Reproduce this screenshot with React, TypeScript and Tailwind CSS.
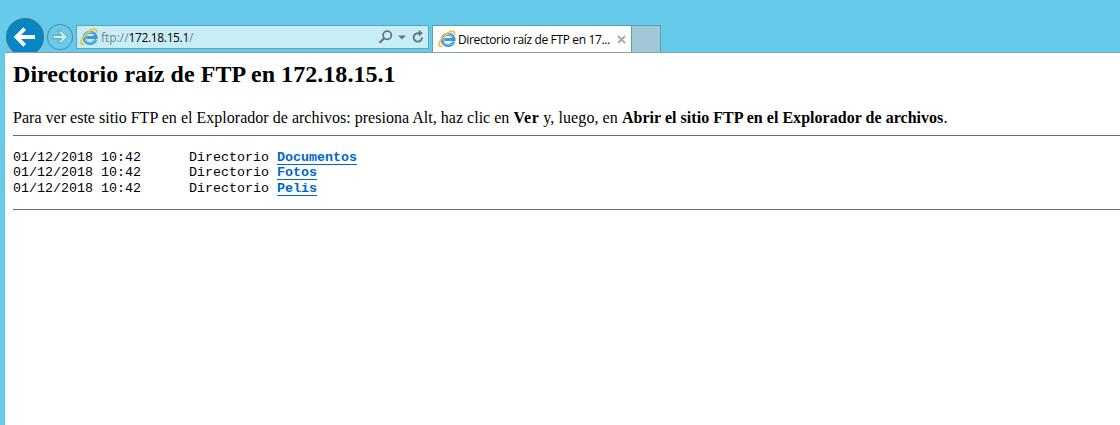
import React from "react";

function ExplorerLogo() {
  return (
    <svg width="18" height="18" viewBox="0 0 18 18" fill="none" className="block shrink-0">
      <path d="M15.8 11.6A6 5.6 0 1 1 16.1 9.6H6.4" stroke="#3f98d0" strokeWidth="3" />
      <path d="M15.3 11.8A5.7 5.3 0 0 1 5 11.8M4.6 7.9A5.8 5.2 0 0 1 15 7" stroke="#74c6ee" strokeWidth="1.1" />
      <path
        d="M3.6 16.2C.3 17.2.2 13.6 3 9.4 6.5 4.2 13.4-.2 15.8 1.4c.9.7.9 1.8.5 2.9"
        stroke="#efb92b"
        strokeWidth="1.5"
        strokeLinecap="round"
      />
      <path d="M2 14.5C1.5 9.9 9.2 2.2 15 1.7" stroke="#ffe068" strokeWidth=".8" />
    </svg>
  );
}

function BackButton() {
  return (
    <svg width="38" height="35" viewBox="0 0 38 35" className="block shrink-0">
      <circle cx="19" cy="19" r="18.4" fill="#0786c5" stroke="#3c748d" strokeWidth="1.2" />
      <path d="M29 19H11M18.7 10.7 10.4 19l8.3 8.3" fill="none" stroke="#fff" strokeWidth="3.8" />
    </svg>
  );
}

function ForwardButton() {
  return (
    <svg width="28" height="28" viewBox="0 0 28 28" className="block shrink-0">
      <circle cx="14" cy="14" r="12.5" fill="#6bcae8" stroke="#4b94ae" strokeWidth="1.1" />
      <path
        d="M7 12.3h8.8l-4.2-4.2h3.9L21.4 14l-5.9 5.9h-3.9l4.2-4.2H7z"
        fill="#d3eff8"
        stroke="#5297ae"
        strokeWidth=".9"
      />
    </svg>
  );
}

function AddressBar() {
  return (
    <div className="ml-[2px] mt-[25px] flex h-6 w-[353px] items-center border border-[#58a5bc] bg-[#c9edf6] pl-[3px]">
      <ExplorerLogo />
      <span className="ml-[3px] whitespace-nowrap pt-[2px] text-[12px] leading-[20px] tracking-[-0.37px] text-[#6e8790]">
        <span className="tracking-[0px]">ftp://</span>
        <span className="text-black">172.18.15.1</span>/
      </span>
      <svg width="50" height="18" viewBox="0 0 50 18" className="ml-auto block" fill="none" stroke="#60777f">
        <circle cx="9.2" cy="7.2" r="4.1" strokeWidth="1.8" />
        <path d="m6.3 10.2-4.8 4.6" strokeWidth="2.2" />
        <path d="M20 7.5h8L24 11.5z" fill="#60777f" stroke="none" />
        <path d="M42.5 5.2H39.7A4.2 4.2 0 1 0 44 9.2" strokeWidth="1.9" />
        <path d="M40.8 1.8v6.8l4.1-3.4z" fill="#60777f" stroke="none" />
      </svg>
    </div>
  );
}

function BrowserTab() {
  return (
    <div className="ml-[3px] mt-[25px] flex h-[27px] w-[200px] items-center border border-b-0 border-[#5a9db2] bg-white pl-[5px]">
      <ExplorerLogo />
      <span className="ml-[2px] whitespace-nowrap pt-[2px] text-[12px] leading-[20px] tracking-[-0.36px] text-black">
        Directorio raíz de FTP en 17...
      </span>
      <svg width="9" height="9" viewBox="0 0 9 9" className="ml-auto mr-[5px] block" stroke="#aaa" strokeWidth="2">
        <path d="m1 1 7 7M8 1 1 8" />
      </svg>
    </div>
  );
}

const folders = ["Documentos", "Fotos", "Pelis"];
const rowHeights = ["h-[15px]", "h-[16px]", "h-[15px]"];

export default function App() {
  return (
    <div className="h-[425px] w-[1120px] overflow-hidden bg-[#66caea]">
      <header className="flex h-[52px] items-start overflow-hidden pl-[6px] font-['Open_Sans','Noto_Sans',sans-serif]">
        <div className="mt-[18px]"><BackButton /></div>
        <div className="ml-[2px] mt-[23px]"><ForwardButton /></div>
        <AddressBar />
        <BrowserTab />
        <div className="mt-[25px] h-[27px] w-[29px] border border-b-0 border-l-0 border-[#5a9db2] bg-[#a2c8d6]" />
      </header>
      <main className="ml-[5px] h-[373px] border-t border-[#839eb0] bg-white pl-2 font-['Liberation_Serif',serif] text-black">
        <h2 className="whitespace-nowrap pt-[8px] text-[24px] font-bold leading-[27px] tracking-[0.05px]">
          Directorio raíz de FTP en 172.18.15.1
        </h2>
        <p className="mt-[20px] whitespace-nowrap text-[16px] leading-[20px] tracking-[0.02px]">
          Para ver este sitio FTP en el Explorador de archivos: presiona Alt, haz clic en{" "}
          <b className="tracking-[0.5px]">Ver</b>
          <span className="tracking-[0.08px]"> y, luego, en </span>
          <b className="tracking-[0.03px]">Abrir el sitio FTP en el Explorador de archivos</b>.
        </p>
        <hr className="mt-[7px] border-0 border-t border-[#696969]" />
        <div className="mt-[14px] font-['Liberation_Mono',monospace] text-[13.333px] leading-[15px]">
          {folders.map((name, i) => (
            <div key={name} className={`flex whitespace-pre ${rowHeights[i]}`}>
              <span>{"01/12/2018 10:42      Directorio "}</span>
              <a href="#" className="h-[15px] border-b border-[#0066cc] font-bold text-[#0066cc]">
                {name}
              </a>
            </div>
          ))}
        </div>
        <hr className="mt-[13px] border-0 border-t border-[#696969]" />
      </main>
    </div>
  );
}
